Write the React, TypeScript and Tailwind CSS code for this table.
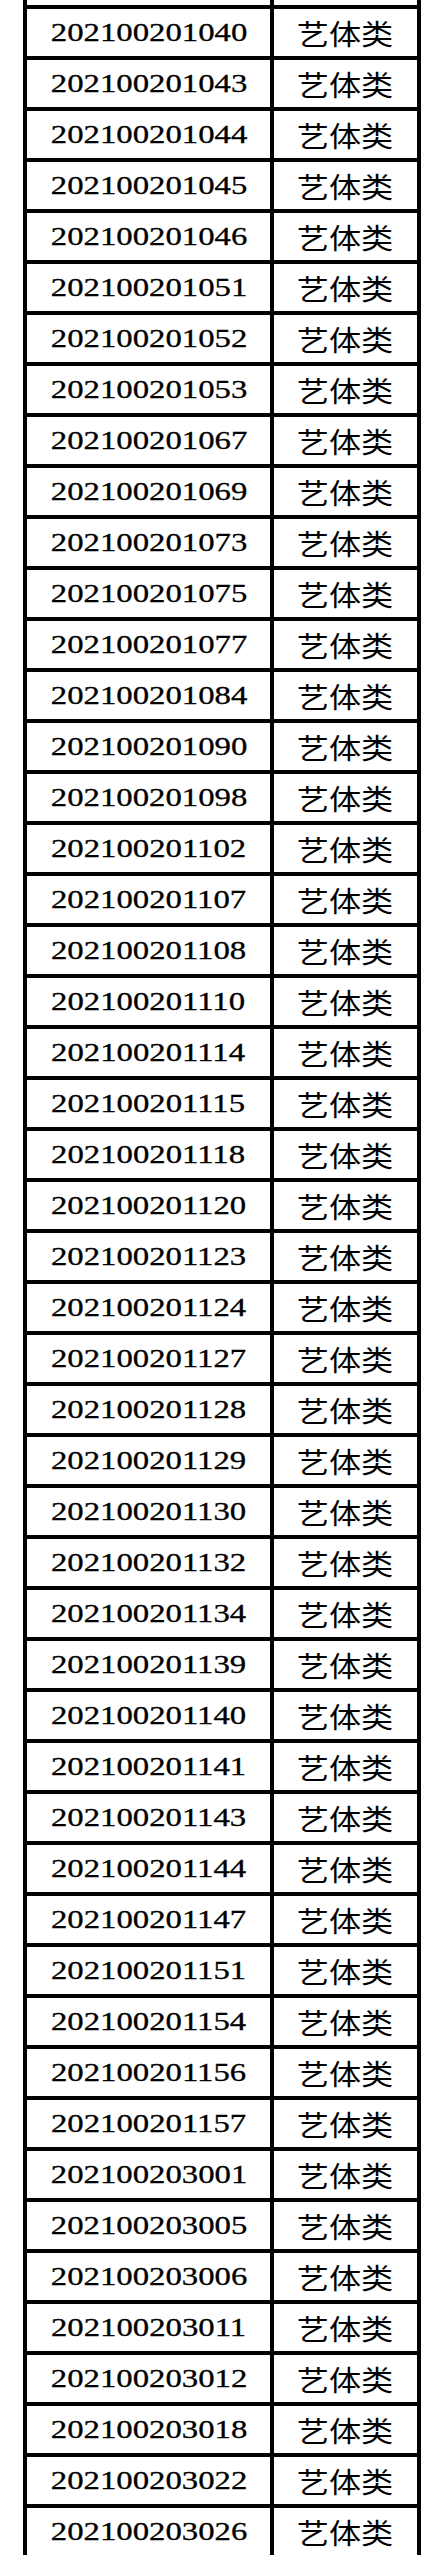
const IDS = [
  '202100201040', '202100201043', '202100201044', '202100201045', '202100201046',
  '202100201051', '202100201052', '202100201053', '202100201067', '202100201069',
  '202100201073', '202100201075', '202100201077', '202100201084', '202100201090',
  '202100201098', '202100201102', '202100201107', '202100201108', '202100201110',
  '202100201114', '202100201115', '202100201118', '202100201120', '202100201123',
  '202100201124', '202100201127', '202100201128', '202100201129', '202100201130',
  '202100201132', '202100201134', '202100201139', '202100201140', '202100201141',
  '202100201143', '202100201144', '202100201147', '202100201151', '202100201154',
  '202100201156', '202100201157', '202100203001', '202100203005', '202100203006',
  '202100203011', '202100203012', '202100203018', '202100203022', '202100203026',
]

const Row = ({ id }: { id: string }) => (
  <div className="flex h-[51px] border-t-4 border-black">
    <div className="flex w-[247px] items-center justify-center border-r-4 border-black">
      <span className="inline-block scale-x-[1.31] font-['Liberation_Serif',serif] text-[25px] leading-none text-black [-webkit-text-stroke:0.3px_black]">
        {id}
      </span>
    </div>
    <div className="flex flex-1 items-center justify-center">
      <span className="inline-block scale-x-[1.15] font-['Noto_Sans_CJK_SC',sans-serif] text-[28px] leading-none text-black">
        艺体类
      </span>
    </div>
  </div>
)

export default function App() {
  return (
    <div className="h-[2556px] w-[429px] overflow-hidden bg-white">
      <div className="ml-[23px] w-[398px] border-x-4 border-black">
        {/* row cut off above the top edge */}
        <div className="flex h-[5px]">
          <div className="w-[247px] border-r-4 border-black" />
        </div>
        {IDS.map((id) => (
          <Row key={id} id={id} />
        ))}
      </div>
    </div>
  )
}
